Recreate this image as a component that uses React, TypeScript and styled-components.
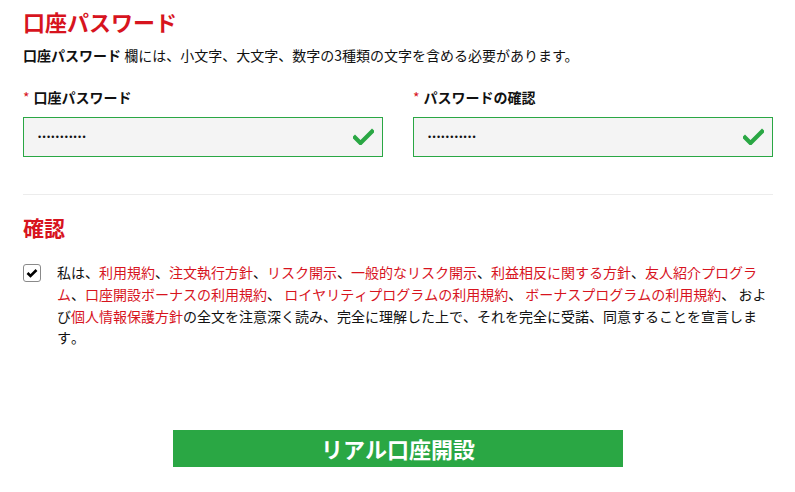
import React from 'react'
import styled, { createGlobalStyle } from 'styled-components'

const GlobalStyle = createGlobalStyle`
  html, body {
    margin: 0;
    padding: 0;
    background: #fff;
  }
  body {
    font-family: "Noto Sans CJK JP", "Noto Sans", sans-serif;
    color: #111;
  }
`

const RED = '#d7141e'
const GREEN = '#2aa744'

const CheckMark = () => (
  <svg width="21" height="17" viewBox="0 0 21 17">
    <path d="M2 9.5 L7.5 15 L19 3.5" fill="none" stroke={GREEN} strokeWidth="4.2" strokeLinecap="square" />
  </svg>
)

const App = () => {
  return (
    <Page>
      <GlobalStyle />
      <SectionTitle size={22} gap={6}>口座パスワード</SectionTitle>
      <Note>
        <strong>口座パスワード</strong> 欄には、小文字、大文字、数字の3種類の文字を含める必要があります。
      </Note>
      <FieldRow>
        <Field>
          <Label><Star>*</Star>口座パスワード</Label>
          <InputBox>
            <Input type="password" readOnly value="aaaaaaaaaaa" />
            <CheckMark />
          </InputBox>
        </Field>
        <Field>
          <Label><Star>*</Star>パスワードの確認</Label>
          <InputBox>
            <Input type="password" readOnly value="aaaaaaaaaaa" />
            <CheckMark />
          </InputBox>
        </Field>
      </FieldRow>
      <Divider />
      <SectionTitle size={21} gap={18}>確認</SectionTitle>
      <AgreeRow>
        <Box>
          <svg width="12" height="10" viewBox="0 0 12 10">
            <path d="M1.5 5 L4.5 8 L10.5 2" fill="none" stroke="#000" strokeWidth="2.6" />
          </svg>
        </Box>
        <AgreeText>
          私は、<Link>利用規約</Link>、<Link>注文執行方針</Link>、<Link>リスク開示</Link>、<Link>一般的なリスク開示</Link>、<Link>利益相反に関する方針</Link>、<Link>友人紹介プログラム</Link>、<Link>口座開設ボーナスの利用規約</Link>、 <Link>ロイヤリティプログラムの利用規約</Link>、 <Link>ボーナスプログラムの利用規約</Link>、 および<Link>個人情報保護方針</Link>の全文を注意深く読み、完全に理解した上で、それを完全に受諾、同意することを宣言します。
        </AgreeText>
      </AgreeRow>
      <ButtonRow>
        <SubmitButton>リアル口座開設</SubmitButton>
      </ButtonRow>
    </Page>
  )
}

export default App

const Page = styled.div`
  width: 750px;
  padding: 0 22px 0 23px;
  display: flex;
  flex-direction: column;
`
const SectionTitle = styled.h2<{ size: number; gap: number }>`
  margin: ${p => p.gap}px 0 0;
  font-size: ${p => p.size}px;
  line-height: 1.4;
  font-weight: 700;
  color: ${RED};
`
const Note = styled.p`
  margin: 8px 0 0;
  font-size: 14px;
  line-height: 20px;
  strong {
    font-weight: 700;
  }
`
const FieldRow = styled.div`
  display: grid;
  grid-template-columns: 1fr 1fr;
  column-gap: 30px;
  margin-top: 22px;
`
const Field = styled.div`
  display: flex;
  flex-direction: column;
`
const Label = styled.label`
  font-size: 14px;
  font-weight: 700;
  line-height: 20px;
  margin-bottom: 10px;
`
const Star = styled.span`
  color: ${RED};
  font-weight: 400;
  margin-right: 4px;
`
const InputBox = styled.div`
  height: 40px;
  box-sizing: border-box;
  border: 1px solid ${GREEN};
  background: #f4f4f4;
  display: flex;
  align-items: center;
  padding: 0 8px 0 14px;
`
const Input = styled.input`
  flex: 1;
  border: none;
  background: transparent;
  outline: none;
  font-size: 9px;
  letter-spacing: 1.3px;
  color: #111;
  padding: 0;
`
const Divider = styled.hr`
  border: none;
  border-top: 1px solid #ececec;
  margin: 37px 0 0;
  width: 750px;
`
const AgreeRow = styled.div`
  display: flex;
  align-items: flex-start;
  gap: 16px;
  margin-top: 20px;
`
const Box = styled.div`
  width: 18px;
  height: 18px;
  flex: none;
  box-sizing: border-box;
  border: 1px solid #8a8a8a;
  border-radius: 3px;
  display: flex;
  align-items: center;
  justify-content: center;
  margin-top: 2px;
`
const AgreeText = styled.p`
  margin: 0;
  font-size: 14px;
  line-height: 21.7px;
  font-kerning: none;
  font-feature-settings: "kern" 0, "palt" 0;
  width: 710px;
`
const Link = styled.a`
  color: ${RED};
`
const ButtonRow = styled.div`
  display: flex;
  justify-content: center;
  margin-top: 81px;
`
const SubmitButton = styled.button`
  width: 450px;
  height: 37px;
  border: none;
  background: ${GREEN};
  color: #fff;
  font-family: "Noto Sans CJK JP", sans-serif;
  font-size: 22px;
  font-weight: 700;
  line-height: 37px;
  padding: 0;
`
